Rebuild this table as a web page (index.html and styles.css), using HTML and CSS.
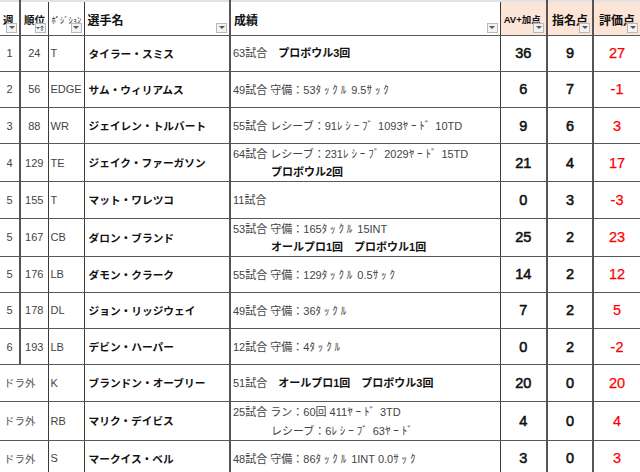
FILE: index.html
```html
<!DOCTYPE html>
<html lang="ja">
<head>
<meta charset="utf-8">
<link rel="stylesheet" href="styles.css">
</head>
<body>
<table class="sheet">
  <colgroup>
    <col class="c-wk"><col class="c-rk"><col class="c-pos"><col class="c-name"><col class="c-rec"><col class="c-av"><col class="c-pick"><col class="c-score">
  </colgroup>
  <thead>
    <tr class="head">
      <th class="h-wk b2"><span class="ht sm">週</span><span class="fb"><svg width="6" height="3" viewBox="0 0 6 3"><path d="M0 0h6L3 3z"/></svg></span></th>
      <th class="h-rk"><span class="ht sm">順位</span><span class="fb"><svg width="8" height="6" viewBox="0 0 8 6"><path d="M0 2h4L2 4z"/><path d="M6 6V1M4.6 2.4L6 1l1.4 1.4" fill="none" stroke="#444" stroke-width="0.9"/></svg></span></th>
      <th class="h-pos"><span class="ht tiny">ﾎﾟｼﾞｼｮﾝ</span><span class="fb"><svg width="6" height="3" viewBox="0 0 6 3"><path d="M0 0h6L3 3z"/></svg></span></th>
      <th class="h-name b2"><span class="ht">選手名</span><span class="fb"><svg width="6" height="3" viewBox="0 0 6 3"><path d="M0 0h6L3 3z"/></svg></span></th>
      <th class="h-rec"><span class="ht">成績</span><span class="fb"><svg width="6" height="3" viewBox="0 0 6 3"><path d="M0 0h6L3 3z"/></svg></span></th>
      <th class="h-av peach b2"><span class="ht av">AV+加点</span><span class="fb"><svg width="6" height="3" viewBox="0 0 6 3"><path d="M0 0h6L3 3z"/></svg></span></th>
      <th class="h-pick peach b2"><span class="ht">指名点</span><span class="fb"><svg width="6" height="3" viewBox="0 0 6 3"><path d="M0 0h6L3 3z"/></svg></span></th>
      <th class="h-score peach"><span class="ht">評価点</span><span class="fb"><svg width="6" height="3" viewBox="0 0 6 3"><path d="M0 0h6L3 3z"/></svg></span></th>
    </tr>
  </thead>
  <tbody>
    <tr>
      <td class="wk b2">1</td><td class="rk">24</td><td class="pos">T</td><td class="name b2">タイラー・スミス</td>
      <td class="rec">63試合　<b>プロボウル3回</b></td>
      <td class="num b2">36</td><td class="num b2">9</td><td class="num red">27</td>
    </tr>
    <tr>
      <td class="wk b2">2</td><td class="rk">56</td><td class="pos">EDGE</td><td class="name b2">サム・ウィリアムス</td>
      <td class="rec">49試合 守備：53<span class="hw">ﾀｯｸﾙ</span> 9.5<span class="hw">ｻｯｸ</span></td>
      <td class="num b2">6</td><td class="num b2">7</td><td class="num red">-1</td>
    </tr>
    <tr>
      <td class="wk b2">3</td><td class="rk">88</td><td class="pos">WR</td><td class="name b2">ジェイレン・トルバート</td>
      <td class="rec">55試合 レシーブ：91<span class="hw">ﾚｼｰﾌﾞ</span> 1093<span class="hw">ﾔｰﾄﾞ</span> 10TD</td>
      <td class="num b2">9</td><td class="num b2">6</td><td class="num red">3</td>
    </tr>
    <tr>
      <td class="wk b2">4</td><td class="rk">129</td><td class="pos">TE</td><td class="name b2">ジェイク・ファーガソン</td>
      <td class="rec"><span class="ln">64試合 レシーブ：231<span class="hw">ﾚｼｰﾌﾞ</span> 2029<span class="hw">ﾔｰﾄﾞ</span> 15TD</span><span class="ln ind"><b>プロボウル2回</b></span></td>
      <td class="num b2">21</td><td class="num b2">4</td><td class="num red">17</td>
    </tr>
    <tr>
      <td class="wk b2">5</td><td class="rk">155</td><td class="pos">T</td><td class="name b2">マット・ワレツコ</td>
      <td class="rec">11試合</td>
      <td class="num b2">0</td><td class="num b2">3</td><td class="num red">-3</td>
    </tr>
    <tr>
      <td class="wk b2">5</td><td class="rk">167</td><td class="pos">CB</td><td class="name b2">ダロン・ブランド</td>
      <td class="rec"><span class="ln">53試合 守備：165<span class="hw">ﾀｯｸﾙ</span> 15INT</span><span class="ln ind"><b>オールプロ1回　プロボウル1回</b></span></td>
      <td class="num b2">25</td><td class="num b2">2</td><td class="num red">23</td>
    </tr>
    <tr>
      <td class="wk b2">5</td><td class="rk">176</td><td class="pos">LB</td><td class="name b2">ダモン・クラーク</td>
      <td class="rec">55試合 守備：129<span class="hw">ﾀｯｸﾙ</span> 0.5<span class="hw">ｻｯｸ</span></td>
      <td class="num b2">14</td><td class="num b2">2</td><td class="num red">12</td>
    </tr>
    <tr>
      <td class="wk b2">5</td><td class="rk">178</td><td class="pos">DL</td><td class="name b2">ジョン・リッジウェイ</td>
      <td class="rec">49試合 守備：36<span class="hw">ﾀｯｸﾙ</span></td>
      <td class="num b2">7</td><td class="num b2">2</td><td class="num red">5</td>
    </tr>
    <tr>
      <td class="wk b2">6</td><td class="rk">193</td><td class="pos">LB</td><td class="name b2">デビン・ハーパー</td>
      <td class="rec">12試合 守備：4<span class="hw">ﾀｯｸﾙ</span></td>
      <td class="num b2">0</td><td class="num b2">2</td><td class="num red">-2</td>
    </tr>
    <tr>
      <td class="undrafted" colspan="2">ドラ外</td><td class="pos">K</td><td class="name b2">ブランドン・オーブリー</td>
      <td class="rec">51試合　<b>オールプロ1回　プロボウル3回</b></td>
      <td class="num b2">20</td><td class="num b2">0</td><td class="num red">20</td>
    </tr>
    <tr>
      <td class="undrafted" colspan="2">ドラ外</td><td class="pos">RB</td><td class="name b2">マリク・デイビス</td>
      <td class="rec"><span class="ln">25試合 ラン：60回 411<span class="hw">ﾔｰﾄﾞ</span> 3TD</span><span class="ln ind">レシーブ：6<span class="hw">ﾚｼｰﾌﾞ</span> 63<span class="hw">ﾔｰﾄﾞ</span></span></td>
      <td class="num b2">4</td><td class="num b2">0</td><td class="num red">4</td>
    </tr>
    <tr>
      <td class="undrafted" colspan="2">ドラ外</td><td class="pos">S</td><td class="name b2">マークイス・ベル</td>
      <td class="rec">48試合 守備：86<span class="hw">ﾀｯｸﾙ</span> 1INT 0.0<span class="hw">ｻｯｸ</span></td>
      <td class="num b2">3</td><td class="num b2">0</td><td class="num red">3</td>
    </tr>
  </tbody>
</table>
</body>
</html>
```

FILE: styles.css
```css
html, body {
  margin: 0;
  padding: 0;
  background: #fff;
}
body {
  font-family: "Liberation Sans", "Noto Sans CJK JP", sans-serif;
  color: #333;
}
.sheet {
  width: 640px;
  table-layout: fixed;
  border-collapse: collapse;
  border-top: 2px solid #e2e2e2;
}
.c-wk { width: 20px; }
.c-rk { width: 28px; }
.c-pos { width: 36px; }
.c-name { width: 146px; }
.c-rec { width: 270px; }
.c-av { width: 47px; }
.c-pick { width: 46px; }
.c-score { width: 47px; }

th, td {
  padding: 0;
  border-left: 1px solid #3a3a3a;
  border-bottom: 1px solid #5a5a5a;
  overflow: hidden;
  white-space: nowrap;
}
th:first-child, td:first-child { border-left: none; }
.b2 { border-right: 2px solid #555; }

.head { height: 34px; }
tbody tr { height: 36.25px; }

th {
  position: relative;
  text-align: left;
  vertical-align: middle;
  font-weight: bold;
  font-size: 12px;
  color: #111;
  padding: 2px 0 0 3px;
}
.peach { background: #fce4d6; text-align: center; padding-left: 0; }
.ht.sm { font-size: 10.5px; }
.ht.tiny { font-size: 8.5px; font-weight: normal; color: #222; }
.ht.av { font-size: 9.5px; }
.h-av { padding-right: 2px; }

.fb {
  position: absolute;
  right: 2px;
  bottom: 2px;
  width: 9px;
  height: 8px;
  border: 1px solid #b9b9b9;
  background: #f2f2f2;
  display: flex;
  align-items: center;
  justify-content: center;
}
.fb svg { display: block; fill: #555; }

td {
  font-size: 11px;
  vertical-align: middle;
}
.wk { text-align: center; color: #444; }
.rk { text-align: center; color: #444; }
.pos { padding-left: 2px; color: #444; }
.name {
  padding-left: 4px;
  font-weight: bold;
  color: #111;
  font-size: 10.7px;
}
.rec {
  padding-left: 2px;
  color: #444;
  line-height: 18px;
}
.rec b { color: #111; }
.hw {
  font-family: "Noto Sans CJK JP", sans-serif;
  letter-spacing: 2.9px;
  margin-right: -1px;
}
.ln { display: block; }
.ind { padding-left: 38px; }
.undrafted {
  padding-left: 4px;
  color: #555;
  font-size: 10.5px;
}
.num {
  text-align: center;
  font-size: 14.5px;
  font-weight: normal;
  color: #111;
  -webkit-text-stroke: 0.55px #111;
}
.num.red { color: #ff0000; -webkit-text-stroke: 0.25px #ff0000; }
```
